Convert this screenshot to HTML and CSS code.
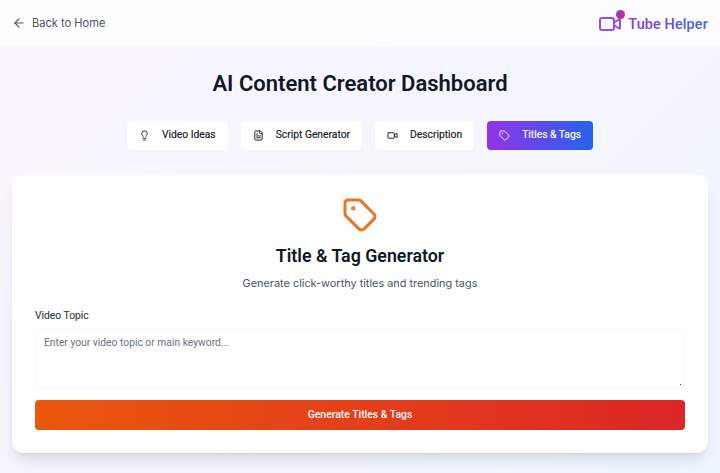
FILE: index.html
```html
<!DOCTYPE html>
<html lang="en">
<head>
<meta charset="utf-8">
<title>AI Content Creator Dashboard</title>
<link rel="stylesheet" href="styles.css">
</head>
<body>
<header class="topbar">
  <a class="back" href="#">
    <svg class="back-icon" viewBox="0 0 24 24" fill="none" stroke="currentColor" stroke-width="2" stroke-linecap="round" stroke-linejoin="round"><path d="m12 19-7-7 7-7"/><path d="M19 12H5"/></svg>
    <span>Back to Home</span>
  </a>
  <div class="brand">
    <div class="brand-mark">
      <svg class="brand-icon" viewBox="0 0 24 24" fill="none" stroke="#9b4dea" stroke-width="2" stroke-linecap="round" stroke-linejoin="round"><path d="m16 13 5.223 3.482a.5.5 0 0 0 .777-.416V7.87a.5.5 0 0 0-.752-.432L16 10.5"/><rect x="2" y="6" width="14" height="12" rx="2"/></svg>
      <span class="brand-dot"></span>
    </div>
    <span class="brand-name">Tube Helper</span>
  </div>
</header>
<main class="main">
  <h1 class="title">AI Content Creator Dashboard</h1>
  <nav class="tabs">
    <button class="tab">
      <svg class="tab-icon" viewBox="0 0 24 24" fill="none" stroke="currentColor" stroke-width="2" stroke-linecap="round" stroke-linejoin="round"><path d="M15 14c.2-1 .7-1.7 1.5-2.5 1-.9 1.5-2.2 1.5-3.500A6 6 0 0 0 6 8c0 1 .2 2.2 1.5 3.5.7.7 1.3 1.5 1.500 2.500"/><path d="M9 18h6"/><path d="M10 22h4"/></svg>
      <span>Video Ideas</span>
    </button>
    <button class="tab">
      <svg class="tab-icon" viewBox="0 0 24 24" fill="none" stroke="currentColor" stroke-width="2" stroke-linecap="round" stroke-linejoin="round"><path d="M15 2H6a2 2 0 0 0-2 2v16a2 2 0 0 0 2 2h12a2 2 0 0 0 2-2V7Z"/><path d="M14 2v4a2 2 0 0 0 2 2h4"/><path d="M10 9H8"/><path d="M16 13H8"/><path d="M16 17H8"/></svg>
      <span>Script Generator</span>
    </button>
    <button class="tab">
      <svg class="tab-icon" viewBox="0 0 24 24" fill="none" stroke="currentColor" stroke-width="2" stroke-linecap="round" stroke-linejoin="round"><path d="m16 13 5.223 3.482a.5.5 0 0 0 .777-.416V7.870a.5.5 0 0 0-.752-.432L16 10.500"/><rect x="2" y="6" width="14" height="12" rx="2"/></svg>
      <span>Description</span>
    </button>
    <button class="tab tab-active">
      <svg class="tab-icon" viewBox="0 0 24 24" fill="none" stroke="currentColor" stroke-width="2" stroke-linecap="round" stroke-linejoin="round"><path d="M12.586 2.586A2 2 0 0 0 11.172 2H4a2 2 0 0 0-2 2v7.172a2 2 0 0 0 .586 1.414l8.704 8.704a2.426 2.426 0 0 0 3.420 0l6.580-6.580a2.426 2.426 0 0 0 0-3.420z"/><circle cx="7.500" cy="7.500" r=".5" fill="currentColor"/></svg>
      <span>Titles &amp; Tags</span>
    </button>
  </nav>
  <section class="card">
    <svg class="card-icon" viewBox="0 0 24 24" fill="none" stroke="#ea7524" stroke-width="2" stroke-linecap="round" stroke-linejoin="round"><path d="M12.586 2.586A2 2 0 0 0 11.172 2H4a2 2 0 0 0-2 2v7.172a2 2 0 0 0 .586 1.414l8.704 8.704a2.426 2.426 0 0 0 3.420 0l6.580-6.580a2.426 2.426 0 0 0 0-3.420z"/><circle cx="7.500" cy="7.500" r=".5" fill="#ea7524"/></svg>
    <h2 class="card-title">Title &amp; Tag Generator</h2>
    <p class="card-sub">Generate click-worthy titles and trending tags</p>
    <form class="form">
      <label class="label" for="topic">Video Topic</label>
      <textarea class="input" id="topic" placeholder="Enter your video topic or main keyword..."></textarea>
      <button class="generate" type="button">Generate Titles &amp; Tags</button>
    </form>
  </section>
</main>
</body>
</html>
```
FILE: styles.css
```css
* { box-sizing: border-box; }
html, body { margin: 0; height: 100%; }
body {
  height: 473px;
  overflow: hidden;
  font-family: "Inter", "Liberation Sans", sans-serif;
  background: linear-gradient(135deg, #faf5ff 0%, #eff6ff 100%);
  color: #111827;
}
.topbar {
  height: 47px;
  padding: 0 12px;
  display: flex;
  align-items: center;
  justify-content: space-between;
  background: rgba(255, 255, 255, 0.8);
}
.back {
  display: flex;
  align-items: center;
  gap: 6px;
  margin-top: -1px;
  color: #4b5563;
  text-decoration: none;
  font-size: 11.100px;
}
.back-icon { width: 14px; height: 14px; }
.brand { display: flex; align-items: center; gap: 6px; }
.brand-mark { position: relative; width: 24px; height: 24px; }
.brand-icon { width: 24px; height: 24px; display: block; }
.brand-dot {
  position: absolute;
  top: -2px;
  right: -3px;
  width: 9px;
  height: 9px;
  border-radius: 50%;
  background: linear-gradient(135deg, #9333ea, #db2777);
}
.brand-name {
  font-family: "Roboto", sans-serif;
  font-weight: 600;
  font-size: 14.650px;
  background: linear-gradient(90deg, #8a42d8, #3f6fdc);
  -webkit-background-clip: text;
  background-clip: text;
  color: transparent;
}
.main { padding: 0 12px; }
.title {
  margin: 0;
  padding-top: 22px;
  height: 74px;
  line-height: 29px;
  text-align: center;
  font-family: "Roboto", sans-serif;
  font-weight: 600;
  font-size: 22px;
  color: #111827;
}
.tabs { display: flex; justify-content: center; gap: 13px; }
.tab {
  height: 29px;
  padding: 0 12px 2px;
  display: flex;
  align-items: center;
  gap: 12px;
  border: 0;
  border-radius: 4px;
  background: #fff;
  color: #111827;
  font-family: "Roboto", sans-serif;
  font-weight: 400;
  font-size: 10.300px;
  -webkit-text-stroke: 0.15px currentColor;
  box-shadow: 0 0 1px rgba(0, 0, 0, 0.08);
}
.tab-icon { width: 11px; height: 11px; flex: none; margin-top: 2px; }
.tab-active {
  background: linear-gradient(90deg, #9333ea, #2563eb);
  color: #fff;
}
.card {
  margin-top: 24px;
  height: 279px;
  padding: 23px 23px 0;
  display: flex;
  flex-direction: column;
  align-items: center;
  border-radius: 12px;
  background: #fff;
  box-shadow: 0 10px 15px -3px rgba(0, 0, 0, 0.1), 0 4px 6px -4px rgba(0, 0, 0, 0.1);
}
.card-icon { width: 36px; height: 36px; display: block; }
.card-title {
  margin: 9px 0 0;
  font-family: "Roboto", sans-serif;
  font-weight: 600;
  font-size: 17.800px;
  line-height: 28px;
  color: #111827;
}
.card-sub {
  margin: 5px 0 0;
  font-size: 10.900px;
  line-height: 16px;
  color: #4b5563;
}
.form { width: 100%; margin-top: 18px; display: flex; flex-direction: column; }
.label {
  font-family: "Roboto", sans-serif;
  font-weight: 400;
  font-size: 10.300px;
  line-height: 14px;
  color: #374151;
  -webkit-text-stroke: 0.15px currentColor;
}
.input {
  display: block;
  margin-top: 6px;
  width: 100%;
  height: 60px;
  padding: 6px 8px;
  resize: vertical;
  border: 1px solid #f3f4f6;
  border-radius: 4px;
  background: #fff;
  font-family: "Roboto", sans-serif;
  font-size: 10.300px;
  line-height: 14px;
  outline: none;
}
.input::placeholder { color: #6b7280; opacity: 1; }
.input::-webkit-resizer {
  background: linear-gradient(#374151, #374151) no-repeat 11px 11px / 1px 1px;
}
.generate {
  margin-top: 11px;
  height: 30px;
  padding-bottom: 2px;
  border: 0;
  border-radius: 4px;
  background: linear-gradient(90deg, #ea580c, #dc2626);
  color: #fff;
  font-family: "Roboto", sans-serif;
  font-weight: 500;
  font-size: 10.400px;
}
```
